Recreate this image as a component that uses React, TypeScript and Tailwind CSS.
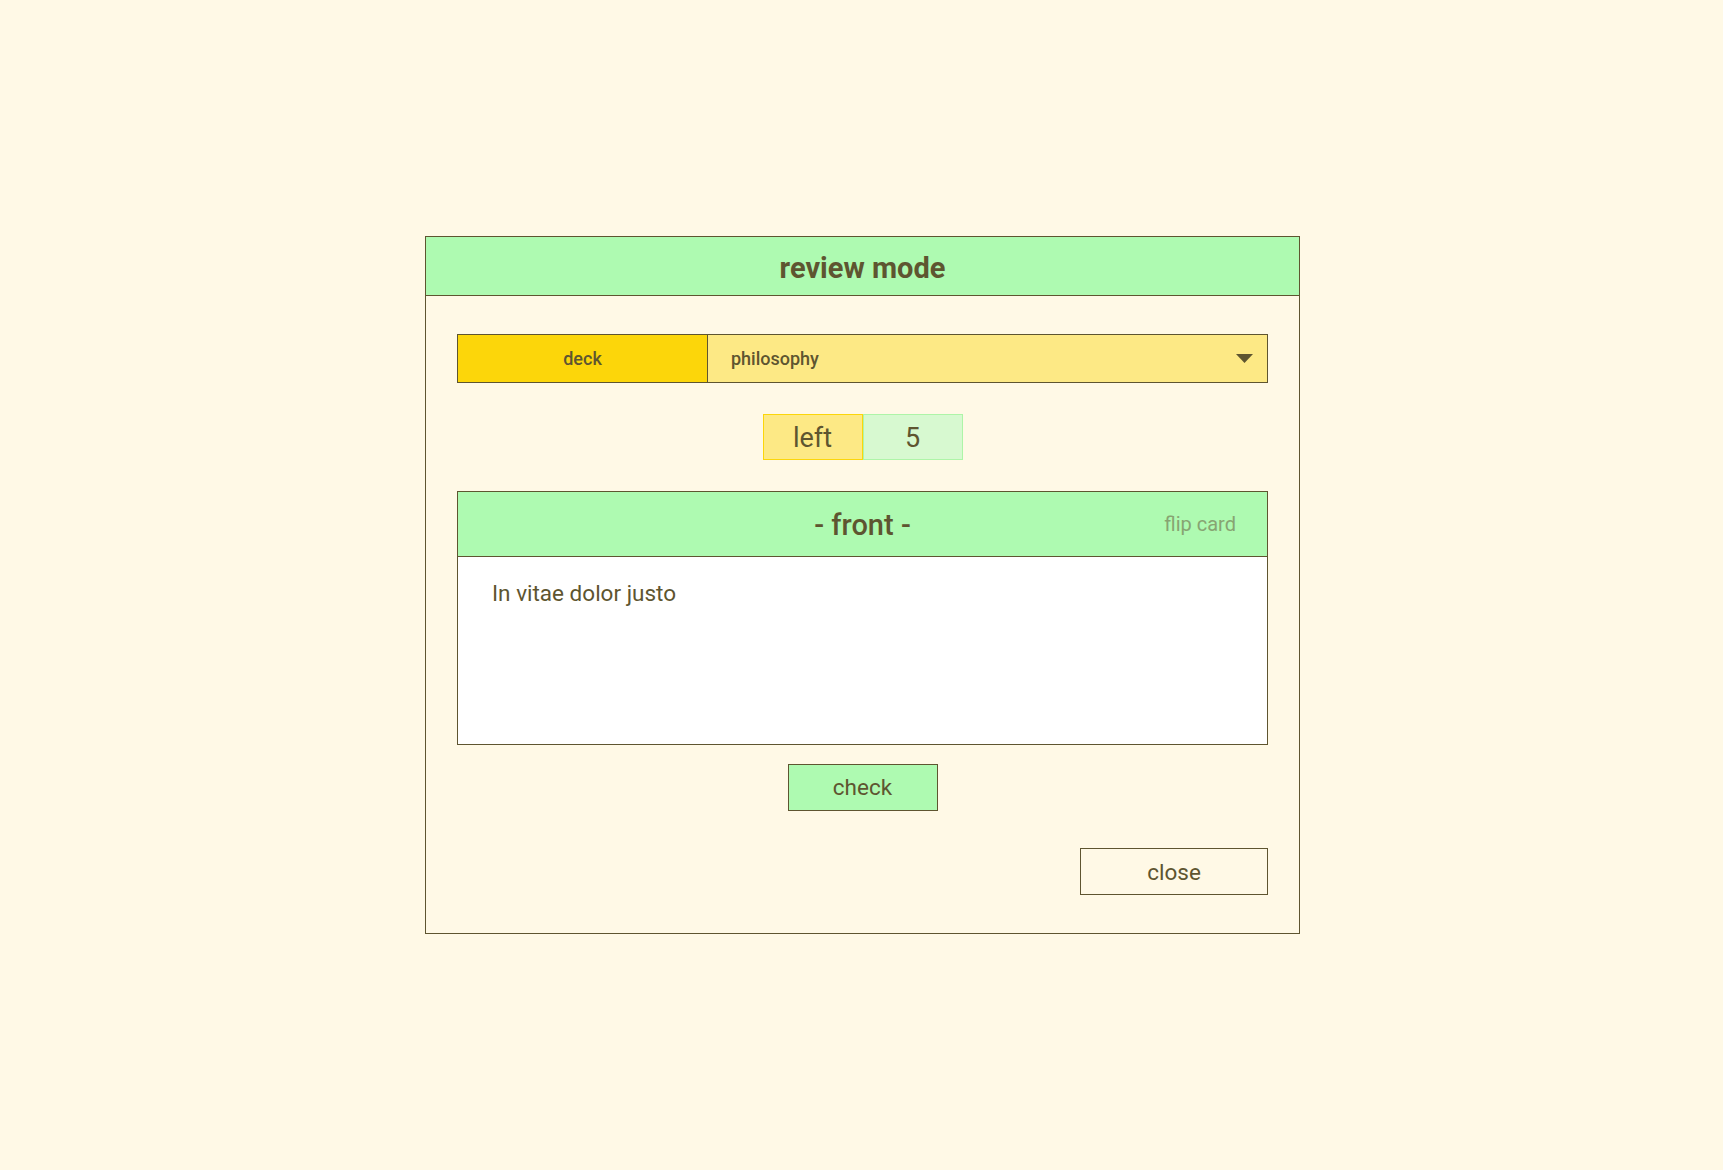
import { useState } from 'react';

export default function App() {
  const [side, setSide] = useState<'front' | 'back'>('front');
  const flip = () => setSide(side === 'front' ? 'back' : 'front');

  return (
    <div className="min-h-screen w-full bg-[#fff9e6] flex items-center justify-center pl-[2px] font-['Roboto',sans-serif] text-[#5e5530]">
      <div className="w-[875px] border border-[#5e5530] bg-[#fff9e6]">
        <div className="h-[59px] pt-[5px] bg-[#aefab1] border-b border-[#5e5530] flex items-center justify-center">
          <h2 className="text-[29px] font-bold">review mode</h2>
        </div>

        <div className="px-[31px] pt-[38px] pb-[38px] flex flex-col">
          <div className="h-[49px] border border-[#5e5530] flex">
            <div className="w-[250px] bg-[#fcd60a] border-r border-[#5e5530] flex items-center justify-center text-[18px] font-medium">
              deck
            </div>
            <div className="flex-1 bg-[#fde985] flex items-center justify-between pl-[23px] pr-[14px] text-[18px] font-medium">
              <span>philosophy</span>
              <svg width="17" height="9" viewBox="0 0 17 9">
                <path d="M0 0h17L8.5 9z" fill="#5e5530" />
              </svg>
            </div>
          </div>

          <div className="mt-[31px] flex justify-center">
            <div className="w-[100px] h-[46px] pt-[2px] bg-[#fde985] border border-[#fcd60a] flex items-center justify-center text-[27px]">
              left
            </div>
            <div className="w-[100px] h-[46px] pt-[2px] bg-[#d7f9d0] border border-[#aef5a8] flex items-center justify-center text-[27px]">
              5
            </div>
          </div>

          <div className="mt-[31px] border border-[#5e5530]">
            <div className="h-[65px] pt-[4px] bg-[#aefab1] border-b border-[#5e5530] relative flex items-center justify-center">
              <span className="text-[29px] font-medium">- {side} -</span>
              <button
                type="button"
                onClick={flip}
                className="absolute right-[31px] top-1/2 -translate-y-1/2 text-[20px] text-[#87a472]"
              >
                flip card
              </button>
            </div>
            <div className="h-[187px] bg-white px-[34px] pt-[20px] text-[22.5px] leading-[33px]">
              In vitae dolor justo
            </div>
          </div>

          <div className="mt-[19px] flex justify-center">
            <button
              type="button"
              className="w-[150px] h-[47px] bg-[#aefab1] border border-[#5e5530] text-[22.5px]"
            >
              check
            </button>
          </div>

          <div className="mt-[37px] flex justify-end">
            <button
              type="button"
              className="w-[188px] h-[47px] pt-[2px] border border-[#5e5530] text-[22.5px]"
            >
              close
            </button>
          </div>
        </div>
      </div>
    </div>
  );
}
